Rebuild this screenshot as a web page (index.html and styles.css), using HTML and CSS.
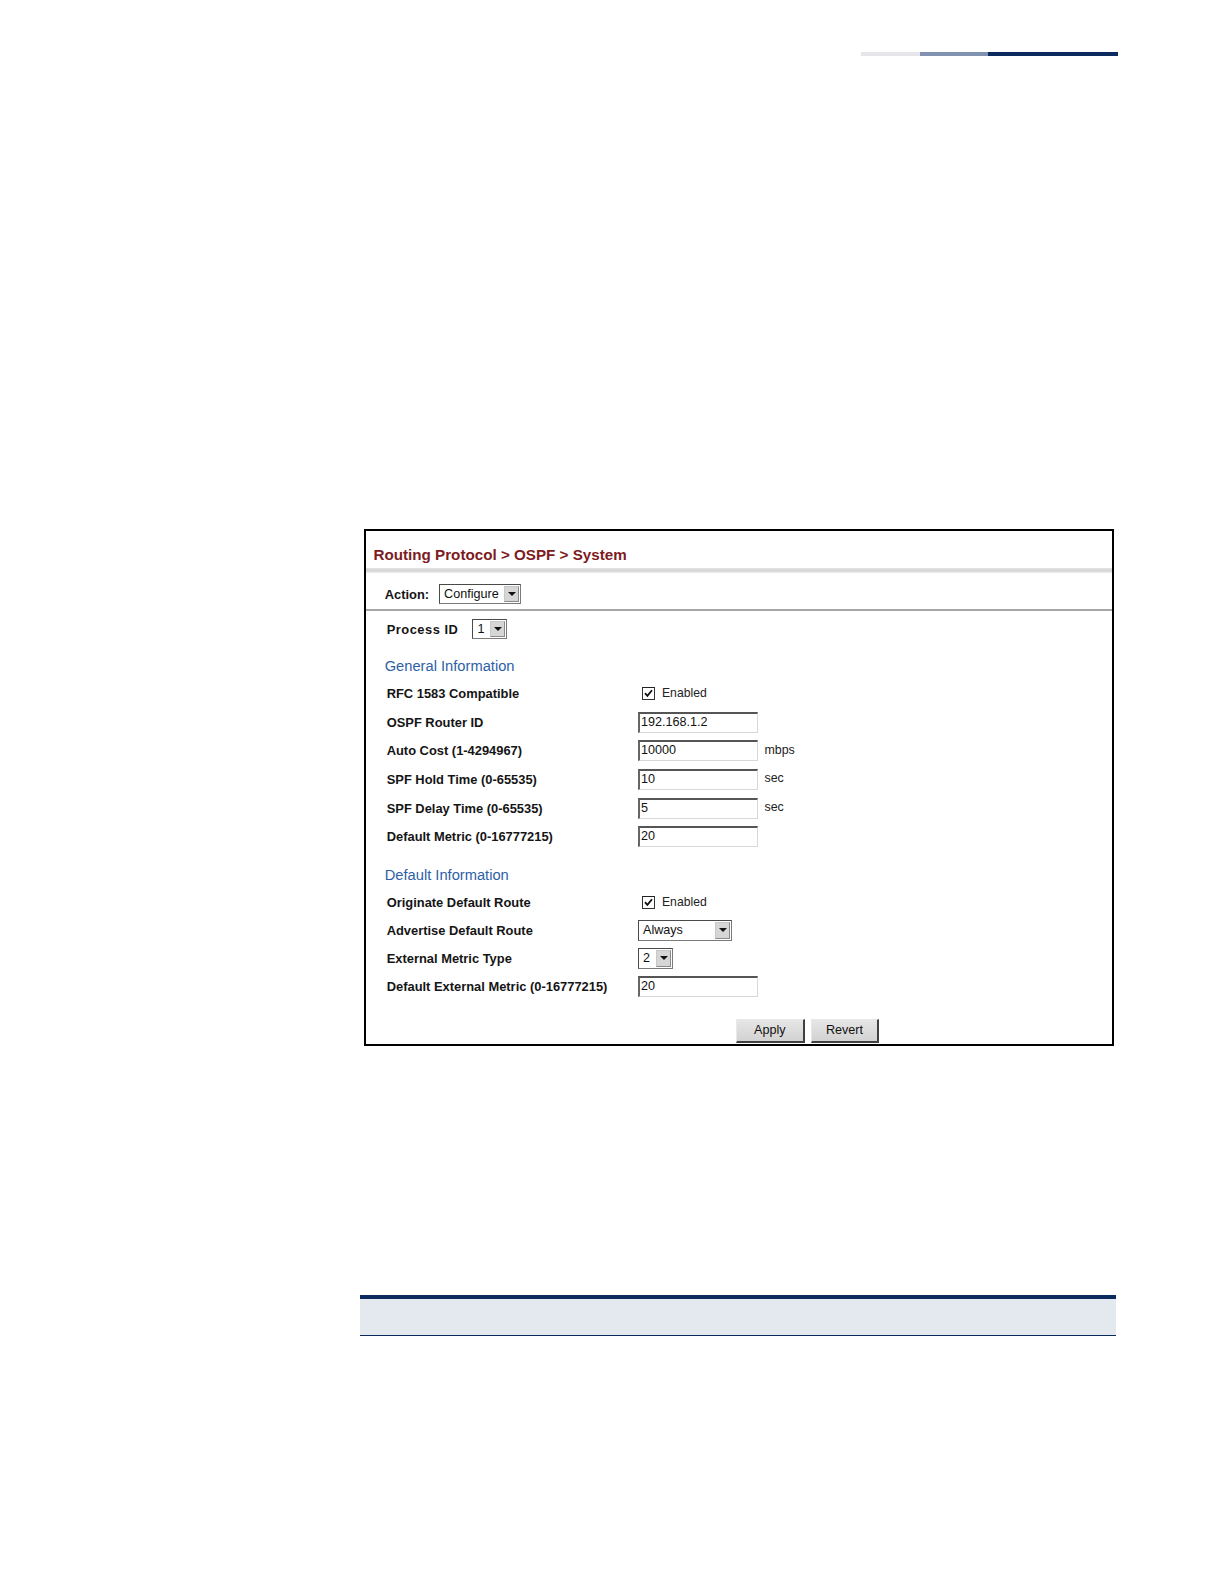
FILE: index.html
```html
<!DOCTYPE html>
<html>
<head>
<meta charset="utf-8">
<link rel="stylesheet" href="styles.css">
</head>
<body>
<div class="page">
  <div class="topbar"><span class="seg seg1"></span><span class="seg seg2"></span><span class="seg seg3"></span></div>

  <div class="figure">
    <div class="hdr"><span class="title">Routing Protocol &gt; OSPF &gt; System</span></div>
    <div class="shade"></div>
    <div class="action">
      <span class="lbl">Action:</span>
      <span class="select sel-config"><span class="val">Configure</span><span class="arrow"></span></span>
    </div>
    <div class="body">
      <div class="proc">
        <span class="lbl proc-lbl">Process ID</span>
        <span class="select sel-small"><span class="val">1</span><span class="arrow"></span></span>
      </div>

      <div class="section section-a">General Information</div>
      <div class="rows rows-a">
        <div class="row"><span class="lbl">RFC 1583 Compatible</span><span class="val-col"><span class="check"><svg viewBox="0 0 9 9" width="9" height="9"><path d="M1 4.2 L3.4 6.8 L8 1.2" fill="none" stroke="#111" stroke-width="1.8"/></svg></span><span class="chk-text">Enabled</span></span></div>
        <div class="row"><span class="lbl">OSPF Router ID</span><span class="val-col"><span class="input">192.168.1.2</span></span></div>
        <div class="row"><span class="lbl">Auto Cost (1-4294967)</span><span class="val-col"><span class="input">10000</span><span class="unit">mbps</span></span></div>
        <div class="row"><span class="lbl">SPF Hold Time (0-65535)</span><span class="val-col"><span class="input">10</span><span class="unit">sec</span></span></div>
        <div class="row"><span class="lbl">SPF Delay Time (0-65535)</span><span class="val-col"><span class="input">5</span><span class="unit">sec</span></span></div>
        <div class="row"><span class="lbl">Default Metric (0-16777215)</span><span class="val-col"><span class="input">20</span></span></div>
      </div>

      <div class="section section-b">Default Information</div>
      <div class="rows rows-b">
        <div class="row"><span class="lbl">Originate Default Route</span><span class="val-col"><span class="check"><svg viewBox="0 0 9 9" width="9" height="9"><path d="M1 4.2 L3.4 6.8 L8 1.2" fill="none" stroke="#111" stroke-width="1.8"/></svg></span><span class="chk-text">Enabled</span></span></div>
        <div class="row"><span class="lbl">Advertise Default Route</span><span class="val-col"><span class="select sel-always"><span class="val">Always</span><span class="arrow"></span></span></span></div>
        <div class="row"><span class="lbl">External Metric Type</span><span class="val-col"><span class="select sel-small2"><span class="val">2</span><span class="arrow"></span></span></span></div>
        <div class="row"><span class="lbl">Default External Metric (0-16777215)</span><span class="val-col"><span class="input">20</span></span></div>
      </div>

      <div class="buttons">
        <span class="btn">Apply</span>
        <span class="btn">Revert</span>
      </div>
    </div>
  </div>

  <div class="table">
    <div class="thead"></div>
  </div>
</div>
</body>
</html>
```
FILE: styles.css
```css
* { box-sizing: border-box; }
html, body { margin: 0; padding: 0; background: #fff; }
body { font-family: "Liberation Sans", Arial, sans-serif; color: #111; }
.page { width: 1224px; height: 1584px; position: relative; overflow: hidden; }

.topbar { display: flex; margin-left: 861px; margin-top: 52px; height: 4px; width: 257px; }
.seg { display: block; height: 4px; }
.seg1 { width: 59px; background: #e6e6ea; }
.seg2 { width: 68px; background: #8191b0; }
.seg3 { width: 130px; background: #0b2a5e; }

.figure {
  margin-top: 473px;
  margin-left: 364px;
  width: 750px;
  height: 517px;
  border: 2px solid #000;
  display: flex;
  flex-direction: column;
}
.hdr { height: 37px; display: flex; align-items: center; padding-left: 7.5px; padding-top: 10px; }
.title { color: #7d1b1e; font-weight: bold; font-size: 15.2px; }
.shade { height: 5px; background: linear-gradient(#e4e4e4, #d4d4d4 50%, #efefef); }
.action { height: 38px; display: flex; align-items: center; padding-left: 18.7px; padding-top: 6px; border-bottom: 2px solid #a6a6a6; }
.action .lbl { margin-right: 10px; }

.lbl { font-weight: bold; font-size: 12.9px; color: #151515; }

.select {
  display: inline-flex;
  align-items: center;
  justify-content: space-between;
  height: 20.5px;
  border: 1px solid #7a7a7a;
  border-top-color: #4a4a4a;
  border-left-color: #4a4a4a;
  background: #fff;
  padding: 1px 1px 1px 4px;
  font-size: 12.6px;
  color: #111;
}
.select .val { line-height: 16px; }
.arrow {
  width: 15px; height: 16.5px;
  background: #d6d6d6;
  border: 1px solid #c8c8c8;
  border-right-color: #8a8a8a;
  border-bottom-color: #8a8a8a;
  position: relative;
  flex: none;
}
.arrow::after {
  content: "";
  position: absolute;
  left: 3px; top: 5px;
  border-left: 4px solid transparent;
  border-right: 4px solid transparent;
  border-top: 4px solid #111;
}
.sel-config { width: 82px; }
.sel-small { width: 35px; height: 19.5px; }
.sel-small2 { width: 35px; }
.sel-always { width: 94px; }

.body { padding-left: 20.7px; display: flex; flex-direction: column; flex: 1; }
.proc { height: 36px; display: flex; align-items: center; }
.proc-lbl { width: 85.8px; letter-spacing: 0.5px; }

.section { color: #2e5fa6; font-size: 14.7px; display: flex; align-items: center; margin-left: -2px; }
.section-a { height: 32px; padding-top: 6px; }
.section-b { height: 37px; padding-top: 10.5px; }

.rows { display: flex; flex-direction: column; }
.row { display: flex; align-items: center; height: 28.7px; flex: none; }
.rows-b .row { height: 28.1px; }
.row .lbl { width: 251.3px; flex: none; }
.val-col { display: flex; align-items: center; }

.check {
  width: 13px; height: 13px;
  border: 1px solid #333;
  border-top-color: #222;
  display: inline-flex; align-items: center; justify-content: center;
  margin-left: 4px;
  background: #fff;
}
.chk-text { font-size: 12.2px; margin-left: 7px; color: #222; }

.input {
  width: 120px; height: 21px;
  border: 1px solid #d8d8d8;
  border-top: 2px solid #555;
  border-left: 2px solid #666;
  font-size: 12.6px;
  line-height: 17px;
  padding-left: 1px;
  color: #111;
  background: #fff;
}
.unit { font-size: 12.4px; margin-left: 6.5px; margin-top: -2px; color: #222; }

.buttons { display: flex; gap: 6px; margin-left: 349.3px; margin-top: 18.5px; }
.btn {
  width: 68.7px; height: 23.5px;
  background: linear-gradient(#e6e6e6, #d2d2d2);
  border: 1px solid #e8e8e8;
  border-right: 2px solid #404040;
  border-bottom: 2px solid #404040;
  font-size: 12.6px;
  display: flex; align-items: center; justify-content: center;
  color: #111;
}

.table { margin-top: 249px; margin-left: 360.4px; width: 755.5px; }
.thead { height: 40.7px; border-top: 4px solid #0b2a5e; border-bottom: 1px solid #0b2a5e; background: #e4e8ef; }
```
